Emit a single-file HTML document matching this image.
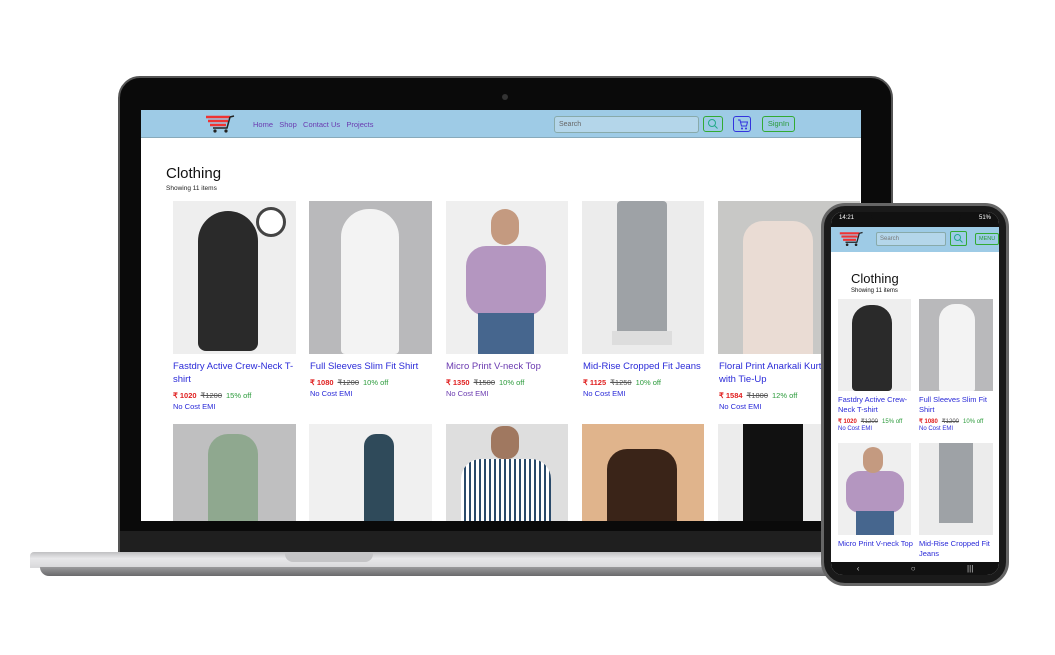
<!DOCTYPE html><html><head><meta charset="utf-8"><style>
*{margin:0;padding:0;box-sizing:border-box}
body{width:1055px;height:655px;background:#fff;position:relative;overflow:hidden;font-family:"Liberation Sans",sans-serif}
.a{position:absolute}
.t{font-size:9.5px;color:#2a2ad8;line-height:13px}
.p{font-size:7.5px;line-height:10px;white-space:nowrap}
.r{color:#e02020;font-weight:bold}.s{color:#555;text-decoration:line-through;margin-left:4px}.g{color:#2a9a3a;margin-left:4px}
.e{font-size:7.5px;color:#2a2ad8}
</style></head><body>
<div class="a" style="left:118px;top:76px;width:775px;height:478px;background:#0a0a0a;border-radius:22px 22px 0 0;border:2px solid #555"></div>
<div class="a" style="left:120px;top:531px;width:771px;height:22px;background:#1f1f1f"></div>
<div class="a" style="left:502px;top:94px;width:6px;height:6px;border-radius:50%;background:#333"></div>
<div class="a" style="left:141px;top:110px;width:720px;height:411px;background:#fff;overflow:hidden">
 <div class="a" style="left:0;top:0;width:720px;height:28px;background:#9ecbe6;border-bottom:1px solid #8ab"></div>
 <svg class="a" style="left:64px;top:5px" width="32" height="18" viewBox="0 0 32 18"><path d="M1 2h24M3 6h20M5 10h16" stroke="#e33" stroke-width="2.5"/><path d="M25 2l4-1M25 2l-3 11H8" stroke="#222" stroke-width="1.5" fill="none"/><circle cx="10" cy="16" r="1.6" fill="#222"/><circle cx="21" cy="16" r="1.6" fill="#222"/></svg>
 <div class="a" style="left:112px;top:10px;font-size:7.5px;color:#6a3ab0;white-space:nowrap">Home&nbsp;&nbsp; Shop&nbsp;&nbsp; Contact Us&nbsp;&nbsp; Projects</div>
 <div class="a" style="left:413px;top:6px;width:145px;height:17px;background:#b4d6ea;border:1px solid #8aa;border-radius:3px;font-size:7px;color:#666;padding:4px 4px;line-height:8px">Search</div>
 <div class="a" style="left:562px;top:6px;width:20px;height:16px;border:1px solid #3a3;border-radius:3px"></div>
 <svg class="a" style="left:566px;top:8px" width="12" height="12"><circle cx="5" cy="5" r="3.5" stroke="#2a8" fill="none"/><path d="M7.5 7.5l3 3" stroke="#2a8"/></svg>
 <div class="a" style="left:592px;top:6px;width:18px;height:16px;border:1px solid #33d;border-radius:3px"></div>
 <svg class="a" style="left:596px;top:9px" width="11" height="11" viewBox="0 0 11 11"><path d="M1 1h2l1.5 6h5l1-4H4" stroke="#33d" fill="none"/><circle cx="5" cy="9.5" r="1" fill="#33d"/><circle cx="9" cy="9.5" r="1" fill="#33d"/></svg>
 <div class="a" style="left:621px;top:6px;width:33px;height:16px;border:1px solid #3a3;border-radius:3px;font-size:7.5px;color:#2a9a3a;text-align:center;line-height:14px">SignIn</div>
 <div class="a" style="left:25px;top:55px;font-size:15px;color:#111">Clothing</div>
 <div class="a" style="left:25px;top:75px;font-size:6.5px;color:#222">Showing 11 items</div>
</div>
<div class="a" style="left:173px;top:201px;width:123px;height:153px;background:#eee"><div class="a" style="left:25px;top:10px;width:60px;height:140px;background:#2a2a2a;border-radius:30px 30px 8px 8px"></div><div class="a" style="left:83px;top:6px;width:30px;height:30px;border-radius:50%;border:3px solid #444;background:#fff"></div></div>
<div class="a" style="left:309px;top:201px;width:123px;height:153px;background:#b9b9bb"><div class="a" style="left:32px;top:8px;width:58px;height:145px;background:#f3f3f3;border-radius:28px 28px 4px 4px"></div></div>
<div class="a" style="left:446px;top:201px;width:122px;height:153px;background:#efefef"><div class="a" style="left:20px;top:45px;width:80px;height:70px;background:#b496c0;border-radius:20px"></div><div class="a" style="left:32px;top:112px;width:56px;height:41px;background:#46668e"></div><div class="a" style="left:45px;top:8px;width:28px;height:36px;background:#c49a80;border-radius:14px"></div></div>
<div class="a" style="left:582px;top:201px;width:122px;height:153px;background:#ececec"><div class="a" style="left:35px;top:0;width:50px;height:135px;background:#9ea2a6;border-radius:4px"></div><div class="a" style="left:30px;top:130px;width:60px;height:14px;background:#ddd"></div></div>
<div class="a" style="left:718px;top:201px;width:142px;height:153px;background:#c8c8c6"><div class="a" style="left:25px;top:20px;width:70px;height:133px;background:#eadcd4;border-radius:20px 20px 0 0"></div></div>
<div class="a t" style="left:173px;top:360px;width:125px">Fastdry Active Crew-Neck T-shirt</div>
<div class="a p" style="left:173px;top:391px"><span class="r">₹ 1020</span><span class="s">₹1200</span><span class="g">15% off</span></div>
<div class="a e" style="left:173px;top:402px">No Cost EMI</div>
<div class="a t" style="left:310px;top:360px">Full Sleeves Slim Fit Shirt</div>
<div class="a p" style="left:310px;top:378px"><span class="r">₹ 1080</span><span class="s">₹1200</span><span class="g">10% off</span></div>
<div class="a e" style="left:310px;top:389px">No Cost EMI</div>
<div class="a t" style="left:446px;top:360px;color:#6a3ab0">Micro Print V-neck Top</div>
<div class="a p" style="left:446px;top:378px"><span class="r">₹ 1350</span><span class="s">₹1500</span><span class="g">10% off</span></div>
<div class="a e" style="left:446px;top:389px;color:#6a3ab0">No Cost EMI</div>
<div class="a t" style="left:583px;top:360px">Mid-Rise Cropped Fit Jeans</div>
<div class="a p" style="left:583px;top:378px"><span class="r">₹ 1125</span><span class="s">₹1250</span><span class="g">10% off</span></div>
<div class="a e" style="left:583px;top:389px">No Cost EMI</div>
<div class="a t" style="left:719px;top:360px;width:110px">Floral Print Anarkali Kurta with Tie-Up</div>
<div class="a p" style="left:719px;top:391px"><span class="r">₹ 1584</span><span class="s">₹1800</span><span class="g">12% off</span></div>
<div class="a e" style="left:719px;top:402px">No Cost EMI</div>
<div class="a" style="left:173px;top:424px;width:123px;height:97px;background:#bfbfc0"><div class="a" style="left:35px;top:10px;width:50px;height:87px;background:#8fa88f;border-radius:20px 20px 0 0"></div></div>
<div class="a" style="left:309px;top:424px;width:123px;height:97px;background:#f0f0f0"><div class="a" style="left:55px;top:10px;width:30px;height:87px;background:#2f4a5a;border-radius:12px 12px 0 0"></div></div>
<div class="a" style="left:446px;top:424px;width:122px;height:97px;background:#dedede"><div class="a" style="left:15px;top:35px;width:90px;height:62px;background:repeating-linear-gradient(90deg,#fff 0 3px,#2a4a6a 3px 5px);border-radius:20px 20px 0 0"></div><div class="a" style="left:45px;top:2px;width:28px;height:33px;background:#a07860;border-radius:12px"></div></div>
<div class="a" style="left:582px;top:424px;width:122px;height:97px;background:#e0b48c"><div class="a" style="left:25px;top:25px;width:70px;height:72px;background:#3a2418;border-radius:20px 20px 0 0"></div></div>
<div class="a" style="left:718px;top:424px;width:142px;height:97px;background:#ececec"><div class="a" style="left:25px;top:0;width:60px;height:97px;background:#111"></div></div>
<div class="a" style="left:30px;top:552px;width:800px;height:16px;background:linear-gradient(#c0c0c2,#e8e8ea 40%,#d8d8da);border-radius:4px 0 0 0"></div>
<div class="a" style="left:40px;top:567px;width:790px;height:9px;background:linear-gradient(#9a9a9c,#6a6a6c);border-radius:0 0 0 30px"></div>
<div class="a" style="left:285px;top:552px;width:88px;height:10px;background:#c4c4c6;border-radius:0 0 8px 8px"></div>
<div class="a" style="left:821px;top:203px;width:188px;height:383px;background:#1a1a1a;border:3px solid #666;border-radius:24px"></div>
<div class="a" style="left:831px;top:212px;width:168px;height:363px;background:#fff;border-radius:12px;overflow:hidden">
 <div class="a" style="left:0;top:0;width:168px;height:15px;background:#111;color:#fff;font-size:6px;padding:3px 8px">14:21<span style="float:right">51%</span></div>
 <div class="a" style="left:40px;top:0;width:90px;height:12px;background:#111;border-radius:0 0 10px 10px"></div>
 <div class="a" style="left:0;top:15px;width:168px;height:25px;background:#9ecbe6"></div>
 <svg class="a" style="left:8px;top:19px" width="26" height="16" viewBox="0 0 32 18"><path d="M1 2h24M3 6h20M5 10h16" stroke="#e33" stroke-width="2.5"/><path d="M25 2l4-1M25 2l-3 11H8" stroke="#222" stroke-width="1.5" fill="none"/><circle cx="10" cy="16" r="1.6" fill="#222"/><circle cx="21" cy="16" r="1.6" fill="#222"/></svg>
 <div class="a" style="left:45px;top:20px;width:70px;height:14px;background:#b4d6ea;border:1px solid #8aa;border-radius:2px;font-size:6px;color:#777;padding:3px 3px;line-height:7px">Search</div>
 <div class="a" style="left:119px;top:19px;width:17px;height:15px;border:1px solid #3a3;border-radius:2px"></div>
 <svg class="a" style="left:122px;top:21px" width="11" height="11"><circle cx="4.5" cy="4.5" r="3" stroke="#2a8" fill="none"/><path d="M6.5 6.5l3 3" stroke="#2a8"/></svg>
 <div class="a" style="left:144px;top:21px;width:24px;height:12px;border:1px solid #3a3;border-radius:2px;font-size:5.5px;color:#2a9a3a;padding:2px 3px">MENU</div>
 <div class="a" style="left:20px;top:59px;font-size:13px;color:#111">Clothing</div>
 <div class="a" style="left:20px;top:76px;font-size:6px;color:#111">Showing 11 items</div>
 <div class="a" style="left:7px;top:87px;width:73px;height:92px;background:#eee"><div class="a" style="left:14px;top:6px;width:40px;height:86px;background:#2a2a2a;border-radius:18px 18px 4px 4px"></div></div>
 <div class="a" style="left:88px;top:87px;width:74px;height:92px;background:#b9b9bb"><div class="a" style="left:20px;top:5px;width:36px;height:87px;background:#f3f3f3;border-radius:16px 16px 2px 2px"></div></div>
 <div class="a t" style="left:7px;top:183px;font-size:7.5px;line-height:10px;width:75px">Fastdry Active Crew-Neck T-shirt</div>
 <div class="a t" style="left:88px;top:183px;font-size:7.5px;line-height:10px;width:76px">Full Sleeves Slim Fit Shirt</div>
 <div class="a p" style="left:7px;top:205px;font-size:6px"><span class="r">₹ 1020</span><span class="s">₹1200</span><span class="g">15% off</span></div>
 <div class="a p" style="left:88px;top:205px;font-size:6px"><span class="r">₹ 1080</span><span class="s">₹1200</span><span class="g">10% off</span></div>
 <div class="a e" style="left:7px;top:214px;font-size:6px">No Cost EMI</div>
 <div class="a e" style="left:88px;top:214px;font-size:6px">No Cost EMI</div>
 <div class="a" style="left:7px;top:231px;width:73px;height:92px;background:#efefef"><div class="a" style="left:8px;top:28px;width:58px;height:42px;background:#b496c0;border-radius:14px"></div><div class="a" style="left:18px;top:68px;width:38px;height:24px;background:#46668e"></div><div class="a" style="left:25px;top:4px;width:20px;height:26px;background:#c49a80;border-radius:10px"></div></div>
 <div class="a" style="left:88px;top:231px;width:74px;height:92px;background:#ececec"><div class="a" style="left:20px;top:0;width:34px;height:80px;background:#9ea2a6"></div></div>
 <div class="a t" style="left:7px;top:327px;font-size:7.5px;line-height:10px;width:75px">Micro Print V-neck Top</div>
 <div class="a t" style="left:88px;top:327px;font-size:7.5px;line-height:10px;width:76px">Mid-Rise Cropped Fit Jeans</div>
 <div class="a" style="left:0;top:350px;width:168px;height:13px;background:#111;color:#ccc;font-size:8px;display:flex;justify-content:space-around;align-items:center"><span>‹</span><span>○</span><span>|||</span></div>
</div>
</body></html>
